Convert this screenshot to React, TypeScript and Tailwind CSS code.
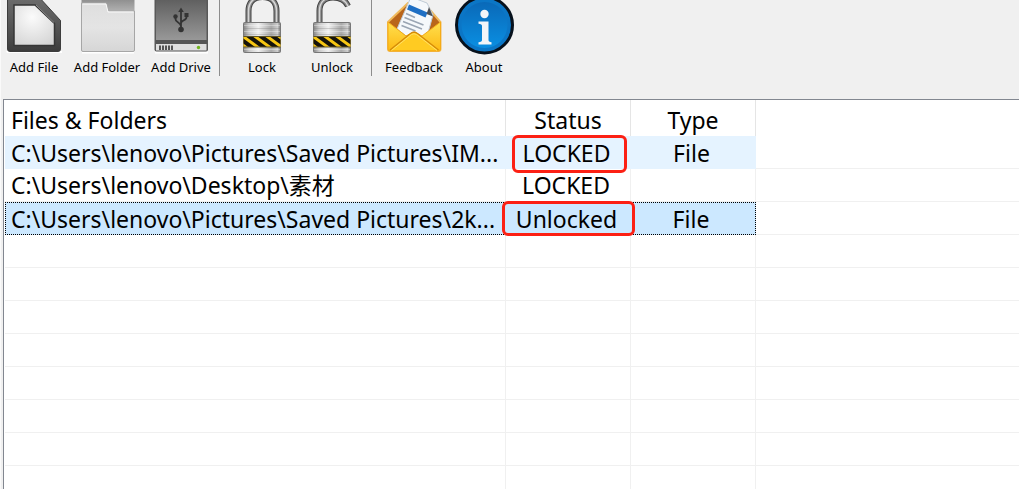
import { useState } from "react";
import type { ReactNode } from "react";

type Entry = {
  path: string;
  status: string;
  type: string;
  hovered?: boolean;
  mark?: string;
};

const entries: Array<Entry> = [
  {
    path: "C:\\Users\\lenovo\\Pictures\\Saved Pictures\\IM...",
    status: "LOCKED",
    type: "File",
    hovered: true,
    mark: "-top-px -bottom-1 left-1.5 right-1",
  },
  {
    path: "C:\\Users\\lenovo\\Desktop\\素材",
    status: "LOCKED",
    type: "",
  },
  {
    path: "C:\\Users\\lenovo\\Pictures\\Saved Pictures\\2k...",
    status: "Unlocked",
    type: "File",
    mark: "-top-0.5 -bottom-0.5 -left-1 -right-1",
  },
];

const emptyRows = Array.from({ length: 8 }, (_, i) => i);

function Icon({ children }: { children: ReactNode }) {
  return (
    <svg width="60" height="58" viewBox="0 0 60 58" aria-hidden="true">
      {children}
    </svg>
  );
}

function FileIcon() {
  return (
    <Icon>
      <defs>
        <linearGradient id="fileEdge" x1="0" y1="0" x2="0" y2="1">
          <stop offset="0" stopColor="#6e6e6e" />
          <stop offset="0.75" stopColor="#4b4b4b" />
          <stop offset="1" stopColor="#3c3c3c" />
        </linearGradient>
        <radialGradient id="filePage" cx="0.45" cy="0.3" r="0.8">
          <stop offset="0" stopColor="#fbfbfb" />
          <stop offset="1" stopColor="#d4d4d4" />
        </radialGradient>
      </defs>
      <path d="M2 51h56v2H3z" fill="#fff" />
      <path
        d="M4 -4H34L56.5 20.5V49q0 2.5-2.5 2.5H6q-2.5 0-2.5-2.5V-4z"
        fill="url(#fileEdge)"
        stroke="#3d3d3d"
      />
      <path
        d="M10 5H31L50.5 23.5V45.5H10z"
        fill="url(#filePage)"
        stroke="#363636"
        strokeWidth="1.5"
      />
      <path d="M32 5L50 22.5" stroke="#8d8d8d" />
    </Icon>
  );
}

function FolderIcon() {
  return (
    <Icon>
      <defs>
        <linearGradient id="folderBack" x1="0" y1="0" x2="0" y2="1">
          <stop offset="0" stopColor="#8a8a8a" />
          <stop offset="0.4" stopColor="#b0b0b0" />
        </linearGradient>
        <linearGradient id="folderFront" x1="0" y1="0" x2="0" y2="1">
          <stop offset="0" stopColor="#dedede" />
          <stop offset="0.5" stopColor="#e4e4e4" />
          <stop offset="1" stopColor="#d6d6d6" />
        </linearGradient>
      </defs>
      <path d="M5 52.5h52" stroke="#fff" strokeWidth="2" />
      <path d="M4.500 -2H57.500V30H4.500z" fill="url(#folderBack)" />
      <path
        d="M4.500 3H29.500L31.500 11H57.500V50q0 1.500-1.500 1.500H6q-1.500 0-1.500-1.500z"
        fill="url(#folderFront)"
        stroke="#a6a6a6"
      />
      <path d="M5.500 4H29L31 12H56.500" fill="none" stroke="#fafafa" />
    </Icon>
  );
}

function DriveIcon() {
  return (
    <Icon>
      <defs>
        <linearGradient id="driveTop" x1="0" y1="0" x2="0" y2="1">
          <stop offset="0" stopColor="#5c5c5c" />
          <stop offset="1" stopColor="#989898" />
        </linearGradient>
      </defs>
      <path d="M4 52.5h53" stroke="#fff" strokeWidth="2" />
      <rect x="3.5" y="-5" width="53.5" height="56.5" rx="2" fill="#595959" />
      <rect x="5" y="-3" width="50.5" height="43" fill="url(#driveTop)" />
      <rect x="5" y="40" width="50.5" height="4" fill="#555" />
      <rect x="5" y="44" width="50.5" height="6.5" fill="#dedede" />
      <path
        d="M9 45.500v4.500M12 45.500v4.500M15 45.500v4.500M18 45.500v4.500M21 45.500v4.500"
        stroke="#333"
        strokeWidth="1.6"
      />
      <circle cx="47.5" cy="47.5" r="1.7" fill="#72b51d" />
      <path
        d="M30 29V11M30 26C29 21.500 24.500 23 24.500 19V16M30 23C31 19 35.500 21 35.500 17V14"
        stroke="#333"
        strokeWidth="1.8"
        fill="none"
      />
      <g fill="#333">
        <path d="M30 7.500l2.800 4.500h-5.600z" />
        <circle cx="30" cy="29.5" r="2.800" />
        <circle cx="24.500" cy="16.500" r="2.200" />
        <rect x="33.500" y="13" width="4" height="4" />
      </g>
    </Icon>
  );
}

function PadlockIcon({ open = false }: { open?: boolean }) {
  const id = open ? "open" : "closed";
  const shackle = open
    ? "M17.5 23V11C17.5 2 23 -2.500 31 -2.500C39 -2.500 43.500 0.500 46 6"
    : "M16.5 23V11C16.5 2 22 -3 30.5 -3C39 -3 44.5 2 44.5 11V23";
  return (
    <Icon>
      <defs>
        <linearGradient id={`${id}Body`} x1="0" y1="0" x2="1" y2="0">
          <stop offset="0" stopColor="#858585" />
          <stop offset="0.15" stopColor="#c9c9c9" />
          <stop offset="0.4" stopColor="#f0f0f0" />
          <stop offset="0.75" stopColor="#a9a9a9" />
          <stop offset="0.92" stopColor="#cdcdcd" />
          <stop offset="1" stopColor="#777" />
        </linearGradient>
        <clipPath id={`${id}Band`}>
          <rect x="11.5" y="36.5" width="37" height="10.5" />
        </clipPath>
      </defs>
      <path d={shackle} fill="none" stroke="#444" strokeWidth="6" />
      <path d={shackle} fill="none" stroke="#858585" strokeWidth="4" />
      <path d={shackle} fill="none" stroke="#d6d6d6" strokeWidth="1.5" />
      <rect
        x="11.5"
        y="22.5"
        width="37"
        height="30"
        rx="1"
        fill={`url(#${id}Body)`}
        stroke="#777"
      />
      <path
        d="M12 25.500H48M12 31.500H48M12 49.500H48"
        stroke="#fff"
        strokeOpacity="0.35"
      />
      <path d="M12 28.500H48M12 34.500H48" stroke="#777" strokeOpacity="0.3" />
      <rect x="11.5" y="36.5" width="37" height="10.5" fill="#f7c613" />
      <g clipPath={`url(#${id}Band)`} fill="#15130c">
        <path d="M1 36h7l15 11h-7zM13 36h7l15 11h-7zM25 36h7l15 11h-7zM37 36h7l15 11h-7z" />
      </g>
      <path d="M11.5 36.5H48.500M11.500 47H48.500" stroke="#5c5124" />
    </Icon>
  );
}

function FeedbackIcon() {
  return (
    <Icon>
      <defs>
        <linearGradient id="envelope" x1="0" y1="0" x2="0" y2="1">
          <stop offset="0" stopColor="#ffe04f" />
          <stop offset="1" stopColor="#fdb913" />
        </linearGradient>
      </defs>
      <path
        d="M4 22L24 3H40L56.5 22V49q0 2-2 2H6q-2 0-2-2z"
        fill="#b9651a"
        stroke="#f0b95a"
        strokeWidth="2"
      />
      <path
        d="M27 -3L43 3L49 15L44 33L30 42L13 29z"
        fill="#f5f8fb"
        stroke="#bfcbd6"
      />
      <path d="M25 4.500L43.500 12.500L41.500 17.500L23 9.500z" fill="#1f6fc4" />
      <path
        d="M22 13.500l9 4M20.500 17.500l19 7.500M19 21.500l19 7.500M17.500 25.500l14 5.500"
        stroke="#9aa5b3"
        strokeWidth="1.5"
      />
      <path d="M45 7L49 16.500L42.500 14z" fill="#4b4f55" />
      <path
        d="M4 22L22 36L30 32L38 36L56.5 22V49q0 2-2 2H6q-2 0-2-2z"
        fill="url(#envelope)"
        stroke="#f5ab16"
      />
      <path
        d="M6 50L26.500 33.500q3.500-2.500 7 0L54.500 50"
        fill="#ffcb22"
        stroke="#d48a08"
        strokeWidth="1.3"
      />
      <path
        d="M7.500 50.500L27.500 34.500q2.500-1.500 5 0L53 50.500"
        fill="none"
        stroke="#ffe067"
      />
    </Icon>
  );
}

function AboutIcon() {
  return (
    <Icon>
      <defs>
        <linearGradient id="aboutDisc" x1="0" y1="0" x2="0" y2="1">
          <stop offset="0" stopColor="#0a69b8" />
          <stop offset="1" stopColor="#0a8fe2" />
        </linearGradient>
      </defs>
      <circle
        cx="30.5"
        cy="25"
        r="28"
        fill="#0b76c6"
        stroke="#07111c"
        strokeWidth="3"
      />
      <circle cx="30.5" cy="25" r="23" fill="url(#aboutDisc)" />
      <circle cx="30.5" cy="14" r="4.200" fill="#f3f5f8" />
      <path
        d="M24.5 21.500H34.500V40q0 2 3 2.200V44.500H24.500V42.200q3.500-.2 3.500-2.200V26q0-2-3.500-2.200z"
        fill="#f3f5f8"
      />
    </Icon>
  );
}

function ToolButton({
  label,
  width = "w-[70px]",
  children,
}: {
  label: string;
  width?: string;
  children: ReactNode;
}) {
  return (
    <button
      type="button"
      className={`${width} flex shrink-0 flex-col items-center text-[13px] leading-[18px] whitespace-nowrap`}
    >
      {children}
      <span>{label}</span>
    </button>
  );
}

function Divider() {
  return <div className="ml-1 mr-[7px] w-px shrink-0 bg-[#8c8c8c]" />;
}

function Toolbar() {
  return (
    <header className="flex overflow-hidden pb-[23px]">
      <ToolButton label="Add File" width="w-[66px]">
        <FileIcon />
      </ToolButton>
      <ToolButton label="Add Folder" width="w-20">
        <FolderIcon />
      </ToolButton>
      <ToolButton label="Add Drive" width="w-[68px]">
        <DriveIcon />
      </ToolButton>
      <Divider />
      <ToolButton label="Lock">
        <PadlockIcon />
      </ToolButton>
      <ToolButton label="Unlock">
        <PadlockIcon open />
      </ToolButton>
      <Divider />
      <ToolButton label="Feedback">
        <FeedbackIcon />
      </ToolButton>
      <ToolButton label="About">
        <AboutIcon />
      </ToolButton>
    </header>
  );
}

function EntryRow({
  entry,
  selected,
  onSelect,
}: {
  entry: Entry;
  selected: boolean;
  onSelect: () => void;
}) {
  const cell = selected
    ? "border-y border-dotted border-y-black bg-[#cce8ff]"
    : entry.hovered
    ? "bg-[#e5f3ff]"
    : "border-b border-r border-[#f0f0f0]";

  return (
    <tr className="h-[33px]" aria-selected={selected} onClick={onSelect}>
      <td
        className={`${cell} ${
          selected ? "border-l border-l-black pl-[5px]" : "pl-1.5"
        }`}
      >
        {entry.path}
      </td>
      <td className={`${cell} relative pr-1 text-center`}>
        {entry.status}
        {entry.mark && (
          <span
            className={`${entry.mark} pointer-events-none absolute z-10 rounded-md border-3 border-[#fc2014]`}
          />
        )}
      </td>
      <td
        className={`${cell} pr-1 text-center ${
          selected ? "border-r border-r-black" : ""
        }`}
      >
        {entry.type}
      </td>
      <td className="border-b border-[#f0f0f0]" />
    </tr>
  );
}

export default function App() {
  const [selected, setSelected] = useState<number>(2);

  return (
    <main className="flex h-screen flex-col overflow-hidden border-l border-[#fafafa] bg-[#f0f0f0] font-['Noto_Sans','Noto_Sans_CJK_SC',sans-serif] text-black">
      <Toolbar />
      <section className="ml-0.5 flex-1 overflow-hidden border-l border-t border-[#828790] bg-white pl-px">
        <table className="w-full table-fixed border-separate border-spacing-0 text-[23px] leading-[30px] whitespace-nowrap">
          <colgroup>
            <col className="w-[501px]" />
            <col className="w-[125px]" />
            <col className="w-[125px]" />
            <col />
          </colgroup>
          <thead>
            <tr className="h-9">
              <th className="border-r border-[#e5e5e5] pt-1 pl-1.5 text-left font-normal">
                Files &amp; Folders
              </th>
              <th className="border-r border-[#e5e5e5] pt-1 font-normal">Status</th>
              <th className="border-r border-[#e5e5e5] pt-1 font-normal">Type</th>
              <td />
            </tr>
          </thead>
          <tbody>
            {entries.map((entry, index) => (
              <EntryRow
                key={entry.path}
                entry={entry}
                selected={selected === index}
                onSelect={() => setSelected(index)}
              />
            ))}
            {emptyRows.map((row) => (
              <tr className="h-[33px]" key={row}>
                <td className="border-b border-r border-[#f0f0f0]" />
                <td className="border-b border-r border-[#f0f0f0]" />
                <td className="border-b border-r border-[#f0f0f0]" />
                <td className="border-b border-[#f0f0f0]" />
              </tr>
            ))}
          </tbody>
        </table>
      </section>
    </main>
  );
}
